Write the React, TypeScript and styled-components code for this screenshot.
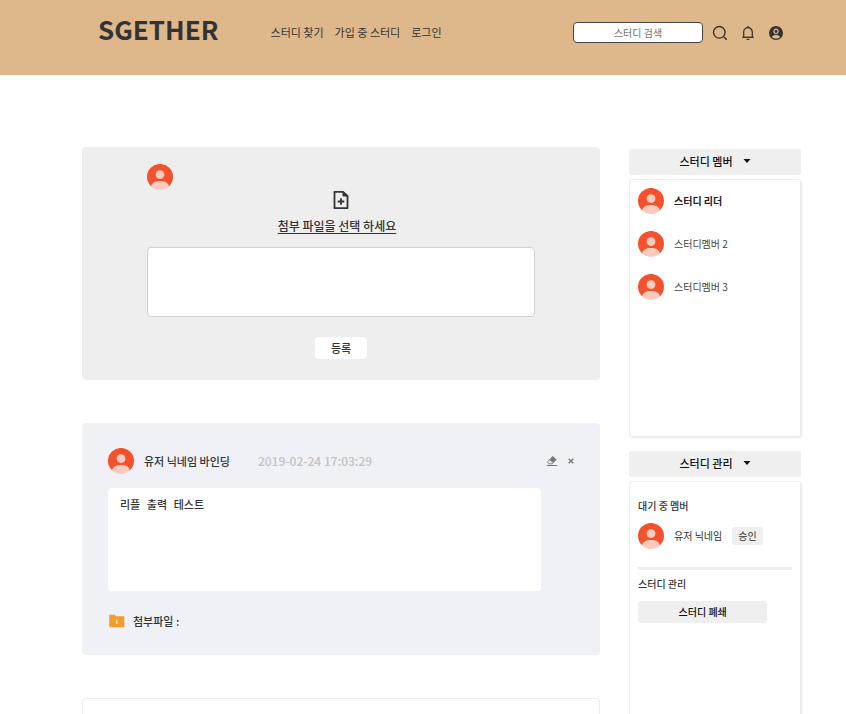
import React from "react";
import styled, { createGlobalStyle } from "styled-components";

const GlobalStyle = createGlobalStyle`
  *, *::before, *::after { box-sizing: border-box; }
  body {
    margin: 0;
    background: #ffffff;
    color: #333333;
    font-family: "Noto Sans CJK KR", sans-serif;
    font-size: 11px;
    line-height: 16px;
  }
  button, input, textarea { font: inherit; color: inherit; margin: 0; }
  button { border: 0; padding: 0; background: none; cursor: pointer; }
  h1, h2, h3, p, ul { margin: 0; padding: 0; font-size: inherit; font-weight: inherit; }
  ul { list-style: none; }
`;

const Header = styled.header`
  display: flex;
  align-items: flex-start;
  min-height: 75px;
  padding: 10px 60px 0 98px;
  background: #deb88a;
`;

const Logo = styled.h1`
  color: #333333;
  font-size: 26px;
  font-weight: 700;
  line-height: 38px;
`;

const Nav = styled.nav`
  display: flex;
  gap: 11px;
  margin: 14px auto 0 52px;
`;

const NavLink = styled.a`
  color: #333333;
  text-decoration: none;
`;

const SearchForm = styled.form`
  display: flex;
  align-items: center;
  gap: 7px;
  margin-top: 12px;
`;

const SearchInput = styled.input`
  width: 130px;
  height: 21px;
  border: 1px solid #444444;
  border-radius: 4px;
  background: #ffffff;
  font-size: 10px;
  text-align: center;
  &::placeholder { color: #757575; opacity: 1; }
`;

const HeaderActions = styled.div`
  display: flex;
  gap: 8px;
`;

const IconButton = styled.button`
  display: flex;
  align-items: center;
  justify-content: center;
  width: 20px;
  height: 20px;
  color: #333333;
`;

const Page = styled.main`
  display: grid;
  grid-template-columns: minmax(0, 1fr) 172px;
  align-items: start;
  gap: 29px;
  padding: 72px 45px 0 82px;
`;

const Feed = styled.div`
  display: flex;
  flex-direction: column;
  gap: 43px;
`;

const Composer = styled.form`
  display: flex;
  flex-direction: column;
  align-items: center;
  padding: 17px 65px 21px;
  border-radius: 4px;
  background: #eeeeee;
`;

const ComposerUser = styled.div`
  align-self: flex-start;
  height: 26px;
`;

const AttachButton = styled.button`
  display: flex;
  flex-direction: column;
  align-items: center;
  gap: 7px;
  color: #333333;
  font-size: 12px;
  font-weight: 500;
  line-height: 18px;
`;

const AttachLabel = styled.span`
  padding-right: 8px;
  text-decoration: underline;
  text-underline-offset: 2px;
`;

const ComposerText = styled.textarea`
  width: 100%;
  height: 70px;
  margin-top: 12px;
  padding: 8px;
  border: 1px solid #d3d3d3;
  border-radius: 4px;
  background: #ffffff;
  resize: none;
`;

const SubmitButton = styled.button`
  margin-top: 20px;
  padding: 3px 16px;
  border-radius: 4px;
  background: #ffffff;
  font-weight: 500;
`;

const Post = styled.article`
  padding: 25px 26px 26px;
  border-radius: 4px;
  background: #f0f1f6;
`;

const PostHeader = styled.div`
  display: flex;
  align-items: center;
  min-height: 26px;
`;

const Author = styled.h2`
  margin-left: 10px;
  font-weight: 500;
`;

const PostDate = styled.time`
  margin: 0 auto 0 28px;
  color: #c2c2c4;
  font-size: 12px;
  font-weight: 500;
`;

const PostAction = styled.button`
  display: flex;
  margin-left: 10px;
  color: #777777;
`;

const PostText = styled.textarea`
  display: block;
  width: 93%;
  height: 103px;
  margin-top: 14px;
  padding: 10px 12px;
  border: 0;
  border-radius: 4px;
  background: #ffffff;
  font-family: "Liberation Mono", "Noto Sans CJK KR", monospace;
  font-weight: 500;
  resize: none;
`;

const Attachment = styled.p`
  display: flex;
  align-items: center;
  gap: 8px;
  margin-top: 22px;
  font-weight: 500;
`;

const NextPost = styled.article`
  min-height: 233px;
  border: 1px solid #ededed;
  border-radius: 4px;
`;

const Sidebar = styled.aside`
  display: flex;
  flex-direction: column;
  gap: 14px;
  padding-top: 2px;
`;

const Section = styled.section`
  display: flex;
  flex-direction: column;
  gap: 4px;
`;

const SectionToggle = styled.button`
  display: flex;
  align-items: center;
  justify-content: center;
  gap: 10px;
  min-height: 26px;
  padding-bottom: 2px;
  border-radius: 3px;
  background: #efefef;
  color: #111111;
  font-weight: 500;
`;

const Panel = styled.div<{ $spaced?: boolean }>`
  min-height: 258px;
  padding: ${(p) => (p.$spaced ? "16px 8px" : "8px")};
  border: 1px solid #eeeeee;
  border-radius: 3px;
  box-shadow: 1px 1px 1px #ececec;
  font-size: 10px;
`;

const MemberList = styled.ul`
  display: flex;
  flex-direction: column;
  gap: 17px;
`;

const Member = styled.li<{ $leader?: boolean }>`
  display: flex;
  align-items: center;
  gap: 10px;
  color: ${(p) => (p.$leader ? "#222222" : "#444444")};
  font-weight: ${(p) => (p.$leader ? 700 : 400)};
`;

const PanelTitle = styled.h3`
  font-weight: 500;
`;

const Waiting = styled.div`
  display: flex;
  align-items: center;
  gap: 10px;
  margin: 9px 0 6px;
  padding-bottom: 18px;
  border-bottom: 3px solid #eeeeee;
`;

const ApproveButton = styled.button`
  padding: 1px 6px;
  border-radius: 3px;
  background: #efefef;
`;

const CloseButton = styled.button`
  width: 84%;
  margin-top: 9px;
  padding: 3px 0;
  border-radius: 3px;
  background: #efefef;
  color: #111111;
  font-weight: 500;
`;

const Svg = styled.svg`
  display: block;
  flex: none;
`;

const Avatar = () => (
  <Svg width="26" height="26" viewBox="0 0 26 26" aria-hidden="true">
    <path d="M4.200 22.500A13 13 0 1 1 21.800 22.500z" fill="#f4522d" />
    <circle cx="13" cy="10.600" r="4.400" fill="#f9cabd" />
    <path d="M4.200 22.500C4.200 19 8 17 13 17s8.800 2 8.800 5.500A13 13 0 0 1 13 26a13 13 0 0 1-8.800-3.500z" fill="#f9cabd" />
  </Svg>
);

const SearchIcon = () => (
  <Svg width="16" height="16" viewBox="0 0 16 16" fill="none" stroke="currentColor" strokeWidth="1.300" aria-hidden="true">
    <circle cx="7.300" cy="7.300" r="5.800" />
    <path d="M12 12l2.700 2.700" strokeWidth="1.600" />
  </Svg>
);

const BellIcon = () => (
  <Svg width="14" height="16" viewBox="0 0 14 16" fill="none" stroke="currentColor" strokeWidth="1.300" aria-hidden="true">
    <path d="M2.700 12V7a4.300 4.300 0 0 1 8.600 0V12" />
    <path d="M1.300 12.300h11.400" />
    <path d="M7 1v1.800M5.600 14.400h2.800" />
  </Svg>
);

const AccountIcon = () => (
  <Svg width="14" height="14" viewBox="0 0 14 14" aria-hidden="true">
    <circle cx="7" cy="7" r="7" fill="currentColor" />
    <circle cx="7" cy="5.300" r="2.100" fill="none" stroke="#deb88a" strokeWidth="1.200" />
    <path d="M2.900 11c.9-1.500 2.300-2 4.100-2s3.200.5 4.100 2C9.900 12.300 8.600 12.700 7 12.700s-2.900-.4-4.100-1.700z" fill="#deb88a" />
  </Svg>
);

const FilePlusIcon = () => (
  <Svg width="16" height="20" viewBox="0 0 16 20" fill="none" stroke="currentColor" strokeWidth="1.800" aria-hidden="true">
    <path d="M10 1.800H1.500v16.400h13V6z" strokeLinejoin="round" />
    <path d="M10 1.800V6h4.500z" fill="currentColor" strokeWidth="1" />
    <path d="M8 8.200v6.600M4.700 11.500h6.600" />
  </Svg>
);

const EraserIcon = () => (
  <Svg width="12" height="12" viewBox="0 0 12 12" aria-hidden="true">
    <path d="M6.600 1l4 3.400-3.300 3.700-4-3.400z" fill="currentColor" />
    <path d="M3.600 4.500L1.600 6.800l1.600 2h3l1.300-1.300" fill="none" stroke="currentColor" strokeWidth="1" />
    <path d="M.8 10.500h10.400" stroke="currentColor" strokeWidth="1" />
  </Svg>
);

const CloseIcon = () => (
  <Svg width="6" height="6" viewBox="0 0 6 6" stroke="currentColor" strokeWidth="1.300" aria-hidden="true">
    <path d="M.7.7l4.600 4.600M5.300.7L.7 5.300" />
  </Svg>
);

const FolderIcon = () => (
  <Svg width="17" height="14" viewBox="0 0 17 14" aria-hidden="true">
    <path d="M2 .8h4.500L8 2.200h7.500c.5 0 .8.300.8.800v9.500c0 .5-.3.800-.8.800H2c-.5 0-.8-.3-.8-.8V1.600C1.200 1.100 1.500.8 2 .8z" fill="#f39c2d" />
    <path d="M8.300 5.500h1v3h1L8.800 10.300 7.300 8.500h1z" fill="#fdebd2" />
  </Svg>
);

const CaretIcon = () => (
  <Svg width="8" height="4" viewBox="0 0 8 4" aria-hidden="true">
    <path d="M.5 0h7L4 4z" fill="currentColor" />
  </Svg>
);

const navItems = ["스터디 찾기", "가입 중 스터디", "로그인"];

const members = [
  { name: "스터디 리더", leader: true },
  { name: "스터디멤버 2", leader: false },
  { name: "스터디멤버 3", leader: false },
];

export default function App() {
  return (
    <>
      <GlobalStyle />
      <Header>
        <Logo>SGETHER</Logo>
        <Nav>
          {navItems.map((item) => (
            <NavLink key={item} href="#">{item}</NavLink>
          ))}
        </Nav>
        <SearchForm onSubmit={(e) => e.preventDefault()}>
          <SearchInput type="text" placeholder="스터디 검색" aria-label="스터디 검색" />
          <HeaderActions>
            <IconButton type="submit" aria-label="검색"><SearchIcon /></IconButton>
            <IconButton type="button" aria-label="알림"><BellIcon /></IconButton>
            <IconButton type="button" aria-label="내 계정"><AccountIcon /></IconButton>
          </HeaderActions>
        </SearchForm>
      </Header>
      <Page>
        <Feed>
          <Composer onSubmit={(e) => e.preventDefault()}>
            <ComposerUser><Avatar /></ComposerUser>
            <AttachButton type="button">
              <FilePlusIcon />
              <AttachLabel>첨부 파일을 선택 하세요</AttachLabel>
            </AttachButton>
            <ComposerText aria-label="내용" />
            <SubmitButton type="submit">등록</SubmitButton>
          </Composer>
          <Post>
            <PostHeader>
              <Avatar />
              <Author>유저 닉네임 바인딩</Author>
              <PostDate dateTime="2019-02-24T17:03:29">2019-02-24 17:03:29</PostDate>
              <PostAction type="button" aria-label="수정"><EraserIcon /></PostAction>
              <PostAction type="button" aria-label="삭제"><CloseIcon /></PostAction>
            </PostHeader>
            <PostText aria-label="댓글" readOnly value="리플 출력 테스트" />
            <Attachment><FolderIcon />첨부파일 :</Attachment>
          </Post>
          <NextPost />
        </Feed>
        <Sidebar>
          <Section>
            <SectionToggle type="button">스터디 멤버<CaretIcon /></SectionToggle>
            <Panel>
              <MemberList>
                {members.map((m) => (
                  <Member key={m.name} $leader={m.leader}><Avatar />{m.name}</Member>
                ))}
              </MemberList>
            </Panel>
          </Section>
          <Section>
            <SectionToggle type="button">스터디 관리<CaretIcon /></SectionToggle>
            <Panel $spaced>
              <PanelTitle>대기 중 멤버</PanelTitle>
              <Waiting>
                <Avatar />
                유저 닉네임
                <ApproveButton type="button">승인</ApproveButton>
              </Waiting>
              <PanelTitle>스터디 관리</PanelTitle>
              <CloseButton type="button">스터디 폐쇄</CloseButton>
            </Panel>
          </Section>
        </Sidebar>
      </Page>
    </>
  );
}
